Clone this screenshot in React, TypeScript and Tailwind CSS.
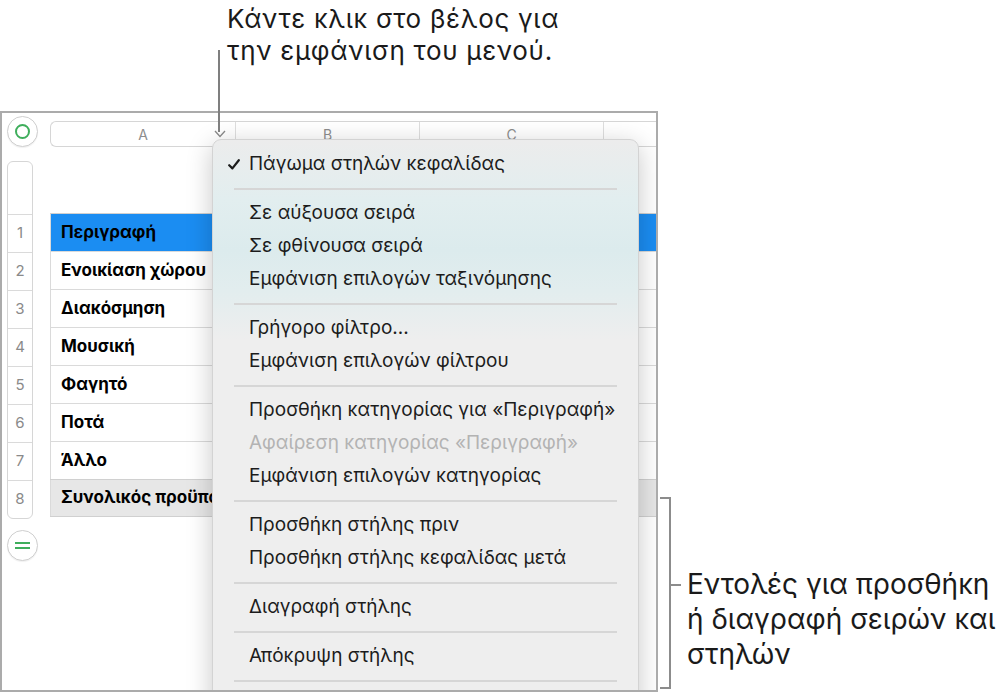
import { ReactNode } from "react";

type MenuEntry = { label?: string; sep?: boolean; checked?: boolean; disabled?: boolean };

const rows = [
  "Περιγραφή",
  "Ενοικίαση χώρου",
  "Διακόσμηση",
  "Μουσική",
  "Φαγητό",
  "Ποτά",
  "Άλλο",
  "Συνολικός προϋπολογισμός",
];

const menu: MenuEntry[] = [
  { label: "Πάγωμα στηλών κεφαλίδας", checked: true },
  { sep: true },
  { label: "Σε αύξουσα σειρά" },
  { label: "Σε φθίνουσα σειρά" },
  { label: "Εμφάνιση επιλογών ταξινόμησης" },
  { sep: true },
  { label: "Γρήγορο φίλτρο..." },
  { label: "Εμφάνιση επιλογών φίλτρου" },
  { sep: true },
  { label: "Προσθήκη κατηγορίας για «Περιγραφή»" },
  { label: "Αφαίρεση κατηγορίας «Περιγραφή»", disabled: true },
  { label: "Εμφάνιση επιλογών κατηγορίας" },
  { sep: true },
  { label: "Προσθήκη στήλης πριν" },
  { label: "Προσθήκη στήλης κεφαλίδας μετά" },
  { sep: true },
  { label: "Διαγραφή στήλης" },
  { sep: true },
  { label: "Απόκρυψη στήλης" },
  { sep: true },
];

const RoundButton = ({ children }: { children: ReactNode }) => (
  <div className="w-[31px] h-[31px] shrink-0 rounded-full border border-[#cfcfcf] bg-white flex items-center justify-center shadow-[0_1px_1px_rgba(0,0,0,0.06)]">
    {children}
  </div>
);

const ContextMenu = () => (
  <div className="absolute left-[210px] top-[26px] w-[427px] h-[600px] rounded-[9px] border border-[#d3d3d3] shadow-[0_6px_26px_rgba(0,0,0,0.22)] bg-[linear-gradient(180deg,#ececec_0px,#e2eeef_60px,#dcebed_110px,#e2edee_150px,#eeeeee_200px,#eeeeee_100%)] pt-[8px]">
    {menu.map((item, i) =>
      item.sep ? (
        <div key={i} className="h-[16px] flex items-center px-[21px]">
          <div className="h-[2px] w-full bg-[#d6d6d6]" />
        </div>
      ) : (
        <div
          key={i}
          className={`relative h-[33px] flex items-center pl-[36px] text-[19px] whitespace-nowrap ${item.disabled ? "text-[#b3b3b3]" : "text-[#1c1c1c]"}`}
        >
          {item.checked && (
            <svg className="absolute left-[15px] top-[11px]" width="12" height="11" viewBox="0 0 12 11">
              <path d="M1.2 6.2 L4.4 9.4 L10.8 1.2" fill="none" stroke="#1c1c1c" strokeWidth="2.2" strokeLinecap="round" strokeLinejoin="round" />
            </svg>
          )}
          {item.label}
        </div>
      )
    )}
  </div>
);

const App = () => {
  return (
    <div className="relative w-[996px] h-[692px] overflow-hidden bg-white text-[#1a1a1a] font-['Inter',sans-serif]">
      {/* callout on top */}
      <div className="h-[111px] pl-[227px] pt-[3px] text-[26px] tracking-[0.7px] leading-[32px] text-[#1a1a1a] whitespace-nowrap">
        <div>Κάντε κλικ στο βέλος για</div>
        <div>την εμφάνιση του μενού.</div>
      </div>
      <div className="absolute left-[218px] top-[50px] w-[2px] h-[82px] bg-[#7f7f7f] z-20" />

      {/* spreadsheet window */}
      <div className="relative w-[658px] h-[581px] border-2 border-[#ababab] overflow-hidden bg-white">
        <div className="pl-[5px] pt-[3px]">
          <div className="flex items-start">
            <RoundButton>
              <div className="w-[15px] h-[15px] rounded-full border-2 border-[#3fae5c]" />
            </RoundButton>
            <div className="ml-[12px] mt-[5px] h-[26px] flex-1 flex rounded-l-[6px] border border-r-0 border-[#d6d6d6] bg-white text-[14px] text-[#8d8d8d]">
              {["A", "B", "C", ""].map((c, i) => (
                <div
                  key={i}
                  className={`relative w-[184px] shrink-0 flex items-center justify-center ${i > 0 ? "border-l border-[#dedede]" : ""}`}
                >
                  {c}
                  {i === 0 && (
                    <svg className="absolute right-[9px] top-[8px]" width="12" height="8" viewBox="0 0 12 8">
                      <path d="M1 1 L6 6.5 L11 1" fill="none" stroke="#8a8a8a" strokeWidth="1.3" />
                    </svg>
                  )}
                </div>
              ))}
            </div>
          </div>

          <div className="flex items-start mt-[14px]">
            <div className="flex flex-col w-[31px] shrink-0">
              <div className="w-[26px] rounded-[6px] border border-[#d6d6d6] bg-white overflow-hidden">
                <div className="h-[52px]" />
                {rows.map((_, i) => (
                  <div
                    key={i}
                    className="h-[38px] border-t border-[#dadada] flex items-center justify-center text-[15px] text-[#8a8a8a]"
                  >
                    {i + 1}
                  </div>
                ))}
              </div>
              <div className="mt-[11px]">
                <RoundButton>
                  <div className="flex flex-col gap-[3px]">
                    <div className="w-[15px] h-[2px] bg-[#3fae5c]" />
                    <div className="w-[15px] h-[2px] bg-[#3fae5c]" />
                  </div>
                </RoundButton>
              </div>
            </div>

            <div className="ml-[12px] mt-[52px] flex-1">
              {rows.map((r, i) => {
                const bg = i === 0 ? "bg-[#1b8df2]" : i === 7 ? "bg-[#e7e7e7]" : "bg-white";
                const top = i === 0 ? "border-t border-[#d0d0d0]" : i === 7 ? "border-t border-[#a8a8a8]" : "border-t border-[#dadada]";
                return (
                  <div key={i} className={`flex h-[38px] ${bg} ${top} ${i === 7 ? "border-b border-[#d0d0d0]" : ""}`}>
                    {[0, 1, 2, 3].map((c) => (
                      <div
                        key={c}
                        className={`w-[184px] shrink-0 flex items-center pl-[10px] whitespace-nowrap overflow-hidden text-[17px] font-bold text-black ${c === 0 ? "border-l border-[#dadada]" : "border-l border-[#e2e2e2]"}`}
                      >
                        {c === 0 ? r : ""}
                      </div>
                    ))}
                  </div>
                );
              })}
            </div>
          </div>
        </div>

        <ContextMenu />
      </div>

      {/* bracket callout on the right */}
      <div className="absolute left-[660px] top-[497px] w-[11px] h-[192px] border-2 border-l-0 border-[#8c8c8c]" />
      <div className="absolute left-[671px] top-[584px] w-[10px] h-[2px] bg-[#8c8c8c]" />
      <div className="absolute left-[687px] top-[567px] text-[28px] leading-[35px] text-[#1a1a1a] whitespace-nowrap">
        <div>Εντολές για προσθήκη</div>
        <div>ή διαγραφή σειρών και</div>
        <div>στηλών</div>
      </div>
    </div>
  );
};

export default App;
